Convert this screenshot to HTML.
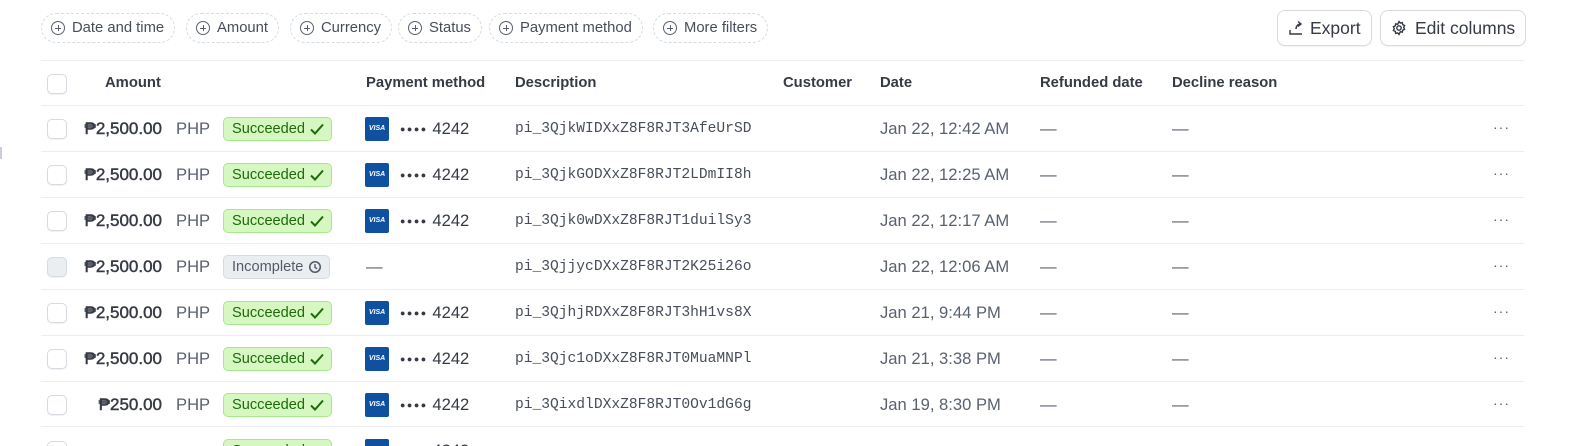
<!DOCTYPE html>
<html><head><meta charset="utf-8"><style>
*{box-sizing:border-box;margin:0;padding:0}
html,body{width:1584px;height:446px;overflow:hidden}
body{background:#fff;font-family:"Liberation Sans",sans-serif;color:#353a44;position:relative}
#wrap{position:absolute;left:0;top:0;width:1584px;height:446px;overflow:hidden}
.f{position:absolute;top:13px;height:30px;border:1px dashed #d5dbe1;border-radius:15px;font-size:14.8px;color:#474e5a;display:flex;align-items:center;padding:0 10px 0 9px;white-space:nowrap}
.f i{display:inline-block;width:14px;height:14px;border:1.3px solid #596171;border-radius:50%;position:relative;margin-right:7px}
.f i:before{content:"";position:absolute;left:2.5px;top:5.6px;width:6.5px;height:1.3px;background:#596171}
.f i:after{content:"";position:absolute;top:2.5px;left:5.6px;height:6.5px;width:1.3px;background:#596171}
.b{position:absolute;top:10px;height:36px;border:1px solid #d5dbe1;border-radius:8px;font-size:17.5px;color:#353a44;display:flex;align-items:center;padding:0 10px;white-space:nowrap;box-shadow:0 1px 1px rgba(0,0,0,.05)}
.line{position:absolute;left:41px;width:1483px;height:1px;background:#ebeef1}
.h{position:absolute;top:75px;font-size:14.8px;font-weight:bold;color:#353a44}
.cb{position:absolute;left:47px;width:20px;height:20px;border:1px solid #d5dbe1;border-radius:5px;background:#fff;box-shadow:0 1px 1px rgba(0,0,0,.06)}
.t{position:absolute;font-size:16.6px;white-space:nowrap;line-height:20px}
.amt{right:1422px;color:#353a44;font-size:17px;-webkit-text-stroke:0.45px #353a44}
.badge{position:absolute;left:223px;height:24px;border:1px solid #a6e88c;background:#d7f7c2;border-radius:5px;color:#1d6b0a;font-size:14.6px;padding:0 6px 0 8px;display:flex;align-items:center}
.visa{position:absolute;left:365px;width:24px;height:24px;background:#0f51a0;border-radius:2px;color:#fff;font-size:7px;font-weight:bold;font-style:italic;text-align:center;line-height:24px}
.m{font-family:"Liberation Mono",monospace;font-size:14.6px;color:#474e5a;left:515px}
.g{color:#596171}
</style></head><body><div id="wrap">
<div style="position:absolute;left:0;top:147px;width:2px;height:12px;background:#ccd"></div>
<div class="f" style="left:41px"><i></i>Date and time</div>
<div class="f" style="left:186px"><i></i>Amount</div>
<div class="f" style="left:290px"><i></i>Currency</div>
<div class="f" style="left:398px"><i></i>Status</div>
<div class="f" style="left:489px"><i></i>Payment method</div>
<div class="f" style="left:653px"><i></i>More filters</div>
<div class="b" style="left:1277px;width:95px"><svg width="16" height="16" viewBox="0 0 16 16" fill="none" stroke="#353a44" stroke-width="1.4" style="margin-right:6px"><path d="M2 10v4h12M8 9c0-3 2-5 5-5M10 1.5l3 2.5-3 2.5"/></svg>Export</div>
<div class="b" style="left:1380px;width:146px"><svg width="16" height="16" viewBox="0 0 16 16" fill="none" stroke="#353a44" stroke-width="1.4" style="margin-right:8px;flex:none"><circle cx="8" cy="8" r="2.2"/><path d="M8 1.5l1.3 1.6 2-.5.4 2 1.9.9-.9 1.9.9 1.9-1.9.9-.4 2-2-.5L8 14.5l-1.3-1.6-2 .5-.4-2-1.9-.9.9-1.9-.9-1.9 1.9-.9.4-2 2 .5z"/></svg>Edit columns</div>
<div class="line" style="top:60px"></div>
<div class="cb" style="top:74px"></div>
<div class="h" style="left:105px">Amount</div>
<div class="h" style="left:366px">Payment method</div>
<div class="h" style="left:515px">Description</div>
<div class="h" style="left:783px">Customer</div>
<div class="h" style="left:880px">Date</div>
<div class="h" style="left:1040px">Refunded date</div>
<div class="h" style="left:1172px">Decline reason</div>
<div class="line" style="top:105px"></div>
<div id="rows"></div>
</div>
<script>
var d=[["₱2,500.00","pi_3QjkWIDXxZ8F8RJT3AfeUrSD","Jan 22, 12:42 AM",1],
["₱2,500.00","pi_3QjkGODXxZ8F8RJT2LDmII8h","Jan 22, 12:25 AM",1],
["₱2,500.00","pi_3Qjk0wDXxZ8F8RJT1duilSy3","Jan 22, 12:17 AM",1],
["₱2,500.00","pi_3QjjycDXxZ8F8RJT2K25i26o","Jan 22, 12:06 AM",0],
["₱2,500.00","pi_3QjhjRDXxZ8F8RJT3hH1vs8X","Jan 21, 9:44 PM",1],
["₱2,500.00","pi_3Qjc1oDXxZ8F8RJT0MuaMNPl","Jan 21, 3:38 PM",1],
["₱250.00","pi_3QixdlDXxZ8F8RJT0Ov1dG6g","Jan 19, 8:30 PM",1],
["","","",1]];
var h="";
d.forEach(function(r,i){var c=129+i*46,t=c-10;
h+='<div class="cb" style="top:'+(c-10)+'px;'+(r[3]?'':'background:#ebeef1')+'"></div>';
if(r[0]){h+='<div class="t amt" style="top:'+t+'px">'+r[0]+'</div><div class="t g" style="left:176px;top:'+t+'px">PHP</div>';}
if(r[3])h+='<div class="badge" style="top:'+(c-12)+'px">Succeeded<svg width="16" height="14" viewBox="0 0 16 14" style="margin-left:4px"><path d="M2 7.5l4 4 8-9" fill="none" stroke="#1d6b0a" stroke-width="2"/></svg></div><div class="visa" style="top:'+(c-12)+'px">VISA</div><div class="t" style="left:400px;top:'+t+'px;color:#353a44"><span style="font-size:9px;letter-spacing:1.5px;vertical-align:2px">●●●●</span> 4242</div>';
else h+='<div class="badge" style="top:'+(c-12)+'px;background:#ebeef1;border-color:#d5dbe1;color:#545969">Incomplete<svg width="16" height="14" viewBox="0 0 16 16" style="margin-left:4px"><circle cx="8" cy="8" r="6" fill="none" stroke="#545969" stroke-width="1.8"/><path d="M8 4.5v4l2.5 1.5" fill="none" stroke="#545969" stroke-width="1.6"/></svg></div><div class="t g" style="left:366px;top:'+t+'px">—</div>';
if(r[1])h+='<div class="t m" style="top:'+(c-10)+'px">'+r[1]+'</div><div class="t g" style="left:880px;top:'+t+'px">'+r[2]+'</div><div class="t g" style="left:1040px;top:'+t+'px">—</div><div class="t g" style="left:1172px;top:'+t+'px">—</div><div class="t g" style="left:1493px;top:'+(c-12)+'px;font-size:14px;letter-spacing:1px">···</div>';
h+='<div class="line" style="top:'+(c+22+(i==6?-1:0))+'px"></div>';});
document.getElementById("rows").innerHTML=h;
</script>
</body></html>
